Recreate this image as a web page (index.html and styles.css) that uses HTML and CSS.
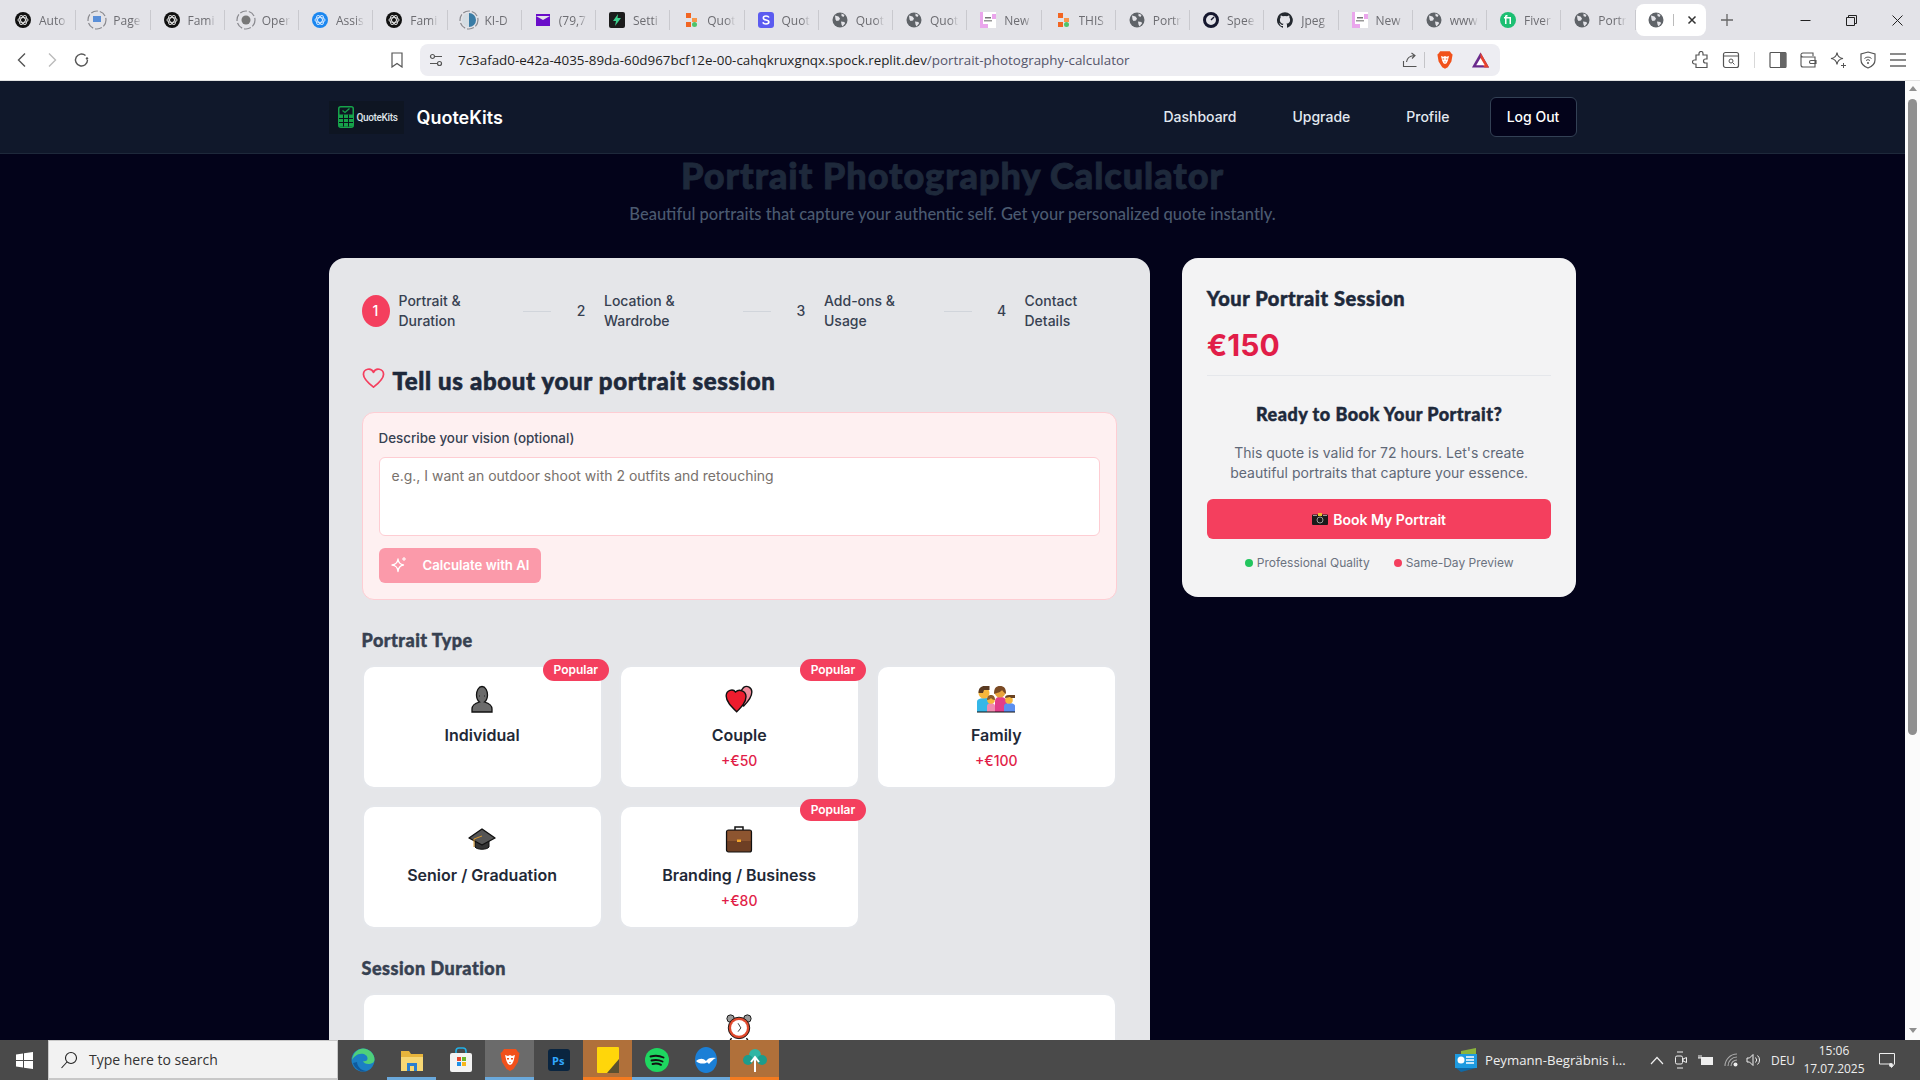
FILE: index.html
```html
<!DOCTYPE html>
<html lang="en">
<head>
  <meta charset="UTF-8" />
  <title>Portrait Photography Calculator</title>
  <link rel="stylesheet" href="styles.css">
</head>
<body>
  <!-- icons used more than once -->
  <svg class="defs" width="0" height="0">
    <symbol id="gpt" viewBox="0 0 16 16">
      <circle cx="8" cy="8" r="8" fill="#111"/>
      <g fill="none" stroke="#ddd" stroke-width="1"><ellipse cx="8" cy="8" rx="5" ry="2.4"/><ellipse cx="8" cy="8" rx="5" ry="2.4" transform="rotate(60 8 8)"/><ellipse cx="8" cy="8" rx="5" ry="2.4" transform="rotate(120 8 8)"/></g>
    </symbol>
    <symbol id="bluegpt" viewBox="0 0 16 16">
      <circle cx="8" cy="8" r="8" fill="#1b87f0"/>
      <g fill="none" stroke="#cfe6ff" stroke-width="1"><ellipse cx="8" cy="8" rx="5" ry="2.4"/><ellipse cx="8" cy="8" rx="5" ry="2.4" transform="rotate(60 8 8)"/><ellipse cx="8" cy="8" rx="5" ry="2.4" transform="rotate(120 8 8)"/></g>
    </symbol>
    <symbol id="globe" viewBox="0 0 16 16">
      <circle cx="8" cy="8" r="7.5" fill="#5f6368"/>
      <path d="M3 3.5l3.5 1 1.5 2-1 2-2.500.5-1-1.500zM9.500 1.500l3 1.500-1 2-2-1zM9 9.500l3.500.5.500 1.500-2.500 3-1-2z" fill="#e3e3e8"/>
    </symbol>
    <symbol id="dashring" viewBox="0 0 20 20">
      <circle cx="10" cy="10" r="9" fill="none" stroke="#8a8a8f" stroke-width="1.200" stroke-dasharray="7 2"/>
    </symbol>
    <symbol id="blocks" viewBox="0 0 16 16">
      <rect x="3" y="1" width="5" height="5" fill="#f26522"/><rect x="9" y="6" width="5" height="4" fill="#f79548"/><rect x="3" y="10" width="5" height="5" fill="#f26522"/><circle cx="11.500" cy="12.500" r="2.500" fill="#4fc36a"/>
    </symbol>
    <symbol id="newpage" viewBox="0 0 16 16">
      <rect width="16" height="16" fill="#fff"/><path d="M0 0h3v16H0zM12 2h4v5h-4zM3 12h5v4H3z" fill="#eaa6ec"/><rect x="5" y="5" width="6" height="1.500" fill="#777"/><rect x="4" y="8" width="8" height="1.500" fill="#999"/>
    </symbol>
    <symbol id="lion" viewBox="0 0 20 24">
      <path d="M4 1h12l2 3 1.500 1-1.500 9-4.500 7-3.500 2-3.500-2-4.500-7L.5 5 2 4z" fill="#f1511b"/>
      <path d="M5 7l3 1 2-1 2 1 3-1-1.500 6L12 16l-2 1-2-1-1.500-3z" fill="#fff"/>
      <path d="M7 10h2v1.500H7zM11 10h2v1.500h-2zM9 14h2l-1 1.500z" fill="#f1511b"/>
    </symbol>
  </svg>

  <div class="screen">
    <div class="tabstrip">
      <div class="tab"><svg class="fav"><use href="#gpt"/></svg><span class="tab-label">Auto</span></div>
      <div class="tab"><svg class="fav wide"><use href="#dashring"/><rect x="6" y="6" width="8" height="6" fill="#5a8fd8"/></svg><span class="tab-label">Page</span></div>
      <div class="tab"><svg class="fav"><use href="#gpt"/></svg><span class="tab-label">Fami</span></div>
      <div class="tab"><svg class="fav wide"><use href="#dashring"/><circle cx="10" cy="10" r="4.500" fill="#777"/></svg><span class="tab-label">Oper</span></div>
      <div class="tab"><svg class="fav"><use href="#bluegpt"/></svg><span class="tab-label">Assis</span></div>
      <div class="tab"><svg class="fav"><use href="#gpt"/></svg><span class="tab-label">Fami</span></div>
      <div class="tab"><svg class="fav wide"><use href="#dashring"/><path d="M10 3a7 7 0 0 1 0 14z" fill="#3a7ca5"/><path d="M10 3a7 7 0 0 0 0 14z" fill="#d5dde3"/></svg><span class="tab-label">KI-D</span></div>
      <div class="tab"><svg class="fav" viewBox="0 0 16 16"><rect x="1" y="2" width="14" height="12" fill="#6a0dc9"/><path d="M1 4l7 4 7-4" fill="#e3e3e8"/></svg><span class="tab-label">(79,7</span></div>
      <div class="tab"><svg class="fav" viewBox="0 0 16 16"><rect width="16" height="16" rx="2" fill="#1c1c1c"/><path d="M9 2L4 9h3l-1 5 6-8H8.500z" fill="#3ecf8e"/></svg><span class="tab-label">Setti</span></div>
      <div class="tab"><svg class="fav"><use href="#blocks"/></svg><span class="tab-label">Quot</span></div>
      <div class="tab"><svg class="fav" viewBox="0 0 16 16"><rect width="16" height="16" rx="3" fill="#5b5bf0"/><path d="M11 5.500C10.500 4.500 9.500 4 8 4 6.500 4 5.300 4.800 5.300 6c0 2.800 5.600 1.400 5.600 4.100C10.900 11.300 9.700 12 8 12c-1.500 0-2.700-.6-3.100-1.700" fill="none" stroke="#fff" stroke-width="1.600"/></svg><span class="tab-label">Quot</span></div>
      <div class="tab"><svg class="fav"><use href="#globe"/></svg><span class="tab-label">Quot</span></div>
      <div class="tab"><svg class="fav"><use href="#globe"/></svg><span class="tab-label">Quot</span></div>
      <div class="tab"><svg class="fav"><use href="#newpage"/></svg><span class="tab-label">New</span></div>
      <div class="tab"><svg class="fav"><use href="#blocks"/></svg><span class="tab-label">THIS</span></div>
      <div class="tab"><svg class="fav"><use href="#globe"/></svg><span class="tab-label">Portr</span></div>
      <div class="tab"><svg class="fav" viewBox="0 0 16 16"><circle cx="8" cy="8" r="6.500" fill="none" stroke="#15172e" stroke-width="3"/><path d="M8 8l3-3" stroke="#15172e" stroke-width="1.500"/></svg><span class="tab-label">Spee</span></div>
      <div class="tab"><svg class="fav" viewBox="0 0 16 16"><path d="M8 .2a8 8 0 0 0-2.500 15.600c.4.100.5-.2.500-.4v-1.400c-2.200.5-2.700-1-2.700-1-.4-.9-.9-1.200-.9-1.200-.7-.5.100-.5.100-.5.800.100 1.200.8 1.200.8.700 1.200 1.900.9 2.300.7.100-.5.300-.9.500-1.100-1.800-.2-3.600-.9-3.600-4 0-.9.300-1.600.8-2.100-.1-.2-.4-1 .1-2.100 0 0 .7-.2 2.200.8a7.600 7.600 0 0 1 4 0c1.500-1 2.200-.8 2.200-.8.400 1.100.2 1.900.1 2.100.5.600.8 1.300.8 2.100 0 3.100-1.900 3.700-3.700 3.900.3.300.6.800.6 1.500v2.200c0 .2.100.5.600.4A8 8 0 0 0 8 .2z" fill="#24292f"/></svg><span class="tab-label">Jpeg</span></div>
      <div class="tab"><svg class="fav"><use href="#newpage"/></svg><span class="tab-label">New</span></div>
      <div class="tab"><svg class="fav"><use href="#globe"/></svg><span class="tab-label">www</span></div>
      <div class="tab"><svg class="fav" viewBox="0 0 16 16"><circle cx="8" cy="8" r="8" fill="#1dbf73"/><path d="M5 12V6.500H4V5h1v-.5C5 3.300 5.800 3 7 3h.5v1.500H7c-.3 0-.5.100-.5.500H11v7H9.500V6.500h-3V12z" fill="#fff"/></svg><span class="tab-label">Fiver</span></div>
      <div class="tab"><svg class="fav"><use href="#globe"/></svg><span class="tab-label">Portr</span></div>
      <div class="tab-active">
        <svg class="fav"><use href="#globe"/></svg><i class="tab-sep"></i>
        <svg class="close-x" viewBox="0 0 10 10"><path d="M1.500 1.500l7 7M8.500 1.500l-7 7" stroke="#333" stroke-width="1.500"/></svg>
      </div>
      <svg class="plus" viewBox="0 0 12 12"><path d="M6 0v12M0 6h12" stroke="#666" stroke-width="1.300"/></svg>
      <div class="win-controls">
        <div class="win-btn"><svg width="11" height="11" viewBox="0 0 11 11"><path d="M.5 5.500h10" stroke="#222"/></svg></div>
        <div class="win-btn"><svg width="11" height="11" viewBox="0 0 11 11"><path d="M.5 2.500h8v8h-8zM2.500 2.500v-2h8v8h-2" fill="none" stroke="#222"/></svg></div>
        <div class="win-btn"><svg width="11" height="11" viewBox="0 0 11 11"><path d="M.5.500l10 10M10.500.500l-10 10" stroke="#222"/></svg></div>
      </div>
    </div>

    <div class="toolbar">
      <div class="tool-left">
        <svg class="tool" viewBox="0 0 16 16"><path d="M11 1.500L4.500 8l6.500 6.500" fill="none" stroke="#555" stroke-width="1.400"/></svg>
        <svg class="tool" viewBox="0 0 16 16"><path d="M5 1.500L11.500 8 5 14.500" fill="none" stroke="#bbb" stroke-width="1.400"/></svg>
        <svg class="tool" viewBox="0 0 16 16"><path d="M13.500 8a6 6 0 1 1-2-4.500" fill="none" stroke="#555" stroke-width="1.400"/><circle cx="13" cy="6.500" r="1.200" fill="#555"/></svg>
        <svg class="tool bookmark" viewBox="0 0 16 16"><path d="M3 1h10v14l-5-3.500L3 15z" fill="none" stroke="#555" stroke-width="1.200"/></svg>
      </div>
      <div class="address">
        <svg class="tool" viewBox="0 0 16 16"><g fill="none" stroke="#555" stroke-width="1.200"><circle cx="4.500" cy="4.500" r="2"/><path d="M7 4.500h7M2 11.500h7"/><circle cx="11.500" cy="11.500" r="2"/></g></svg>
        <span class="url">7c3afad0-e42a-4035-89da-60d967bcf12e-00-cahqkruxgnqx.spock.replit.dev<span class="url-path">/portrait-photography-calculator</span></span>
        <svg class="tool share" viewBox="0 0 16 16"><path d="M1.500 9v5.500h13M4.500 10c.5-4 3-6 7.500-6.500M9.500 1L13 3.500 10 6.500" fill="none" stroke="#555" stroke-width="1.100"/></svg>
        <i class="addr-sep"></i>
        <svg class="addr-lion"><use href="#lion"/></svg>
        <svg class="addr-tri" viewBox="0 0 20 18"><path d="M10 1L19 17H1z" fill="#6a2a8c"/><path d="M10 1L19 17h-5L10 9z" fill="#e8432e"/><path d="M10 7l4.500 7.500h-9z" fill="#fff"/></svg>
      </div>
      <div class="tool-right">
        <svg class="tool-r" viewBox="0 0 18 18"><path d="M7 2.500a2 2 0 0 1 4 0V4h4v4h-1.500a2 2 0 0 0 0 4H15v4.500H4V13H2.500a2 2 0 0 1 0-4H4V4h3z" fill="none" stroke="#555" stroke-width="1.200"/></svg>
        <svg class="tool-r" viewBox="0 0 18 18"><rect x="1.500" y="1.500" width="15" height="15" rx="2" fill="none" stroke="#555" stroke-width="1.200"/><path d="M1.500 5h15" stroke="#555"/><circle cx="9" cy="10" r="2" fill="none" stroke="#555"/><path d="M10.500 11.500l2 2" stroke="#555"/></svg>
        <i class="tool-sep"></i>
        <svg class="tool-r" viewBox="0 0 18 18"><rect x="1" y="1.500" width="16" height="15" rx="1" fill="none" stroke="#555" stroke-width="1.200"/><rect x="11" y="1.500" width="6" height="15" fill="#666"/></svg>
        <svg class="tool-r" viewBox="0 0 18 18"><path d="M2 4.500V14a2 2 0 0 0 2 2h12V6H4a2 2 0 0 1-2-1.500 2 2 0 0 1 2-2.500h10v3M12 9.500h5v3h-5a1.500 1.500 0 0 1 0-3z" fill="none" stroke="#555" stroke-width="1.100"/></svg>
        <svg class="tool-r" viewBox="0 0 18 18"><path d="M8 1.500c.5 4 2 5.500 6 6-4 .5-5.500 2-6 6-.5-4-2-5.500-6-6 4-.5 5.500-2 6-6z" fill="none" stroke="#555" stroke-width="1.200"/><path d="M14.500 12v5M12 14.500h5" stroke="#555"/></svg>
        <svg class="tool-r" viewBox="0 0 18 18"><path d="M9 1l7 2v6c0 4-3 6.500-7 8-4-1.500-7-4-7-8V3z" fill="none" stroke="#555" stroke-width="1.200"/><path d="M5.500 7.500a5 5 0 0 1 7 0M7 9.500a3 3 0 0 1 4 0" fill="none" stroke="#555"/><circle cx="9" cy="12" r="1" fill="#555"/></svg>
        <svg class="tool-r" viewBox="0 0 18 18"><path d="M1 3h16M1 9h16M1 15h16" stroke="#666" stroke-width="1.500"/></svg>
      </div>
    </div>

    <div class="viewport">
      <div class="page">
        <nav class="topnav">
          <div class="topnav-in">
            <div class="brand">
              <div class="logo">
                <svg class="logo-calc" viewBox="0 0 16 22"><rect x=".75" y=".75" width="14.500" height="20.500" rx="2" fill="none" stroke="#16a34a" stroke-width="1.500"/><path d="M1 8.500h14v12H1z" fill="#16a34a"/><path d="M5.500 8.500v12M10.500 8.500v12M1 12.500h14M1 16.500h14" stroke="#0b131e"/><path d="M4.500 4.500l2.500 2 4.500-4" fill="none" stroke="#16a34a" stroke-width="1.300"/></svg>
                <span class="logo-text">QuoteKits</span>
              </div>
              <span class="brand-name">QuoteKits</span>
            </div>
            <div class="navlinks">
              <a class="navlink">Dashboard</a>
              <a class="navlink">Upgrade</a>
              <a class="navlink">Profile</a>
              <button class="logout">Log Out</button>
            </div>
          </div>
        </nav>

        <div class="container">
          <div class="hero">
            <h1>Portrait Photography Calculator</h1>
            <p>Beautiful portraits that capture your authentic self. Get your personalized quote instantly.</p>
          </div>

          <div class="columns">
            <main class="calc">
              <div class="steps">
                <div class="step"><span class="step-num active">1</span><span>Portrait &amp; Duration</span></div>
                <i class="step-line"></i>
                <div class="step"><span class="step-num">2</span><span>Location &amp; Wardrobe</span></div>
                <i class="step-line"></i>
                <div class="step"><span class="step-num">3</span><span>Add-ons &amp; Usage</span></div>
                <i class="step-line"></i>
                <div class="step"><span class="step-num">4</span><span>Contact Details</span></div>
              </div>

              <h2 class="calc-title">
                <svg class="heart" viewBox="0 0 24 24"><path d="M12 21C5 15.500 1.500 12 1.500 7.500A5.500 5.500 0 0 1 12 5.500a5.500 5.500 0 0 1 10.500 2C22.500 12 19 15.500 12 21z" fill="none" stroke="#f43f5e" stroke-width="1.800" stroke-linejoin="round"/></svg>
                Tell us about your portrait session
              </h2>

              <div class="ai-box">
                <label class="ai-label">Describe your vision (optional)</label>
                <textarea class="ai-input" placeholder="e.g., I want an outdoor shoot with 2 outfits and retouching"></textarea>
                <button class="ai-btn">
                  <svg class="ai-spark" viewBox="0 0 16 18"><path d="M7 3c.5 4 2 5.500 5.500 6-3.500.5-5 2-5.500 6.500C6.500 11 5 9.500 1 9c4-.5 5.500-2 6-6z" fill="none" stroke="#fff" stroke-width="1.300" stroke-linejoin="round"/><path d="M13 1v4M11 3h4" stroke="#fff"/></svg>
                  Calculate with AI
                </button>
              </div>

              <h3 class="group-title">Portrait Type</h3>
              <div class="options">
                <div class="option">
                  <span class="badge">Popular</span>
                  <svg class="emoji" viewBox="0 0 28 28"><path d="M4 27v-3c0-3.500 4-6 7.500-7-2-1.500-3-4-3-7 0-4 2-8.500 5.500-8.500s5.500 4.500 5.500 8.500c0 3-1 5.500-3 7 3.500 1 7.500 3.500 7.500 7v3z" fill="#6b6b6b" stroke="#111" stroke-width="1.300"/><path d="M11 11h1M16 11h1" stroke="#222"/></svg>
                  <div class="option-name">Individual</div>
                </div>
                <div class="option">
                  <span class="badge">Popular</span>
                  <svg class="emoji" viewBox="2 2 24 24"><path d="M18 4c3-2 7 0 7 4 0 4-3 8-7 12l-6-8z" fill="#f08a9a" stroke="#111" stroke-width="1.200"/><path d="M11 8c-2-3-8-2-8 3.500C3 16 7 20 12 25c4-4 8-8 8-13 0-5-6-7-9-4z" fill="#ed1c2e" stroke="#111" stroke-width="1.200"/></svg>
                  <div class="option-name">Couple</div>
                  <div class="option-price">+€50</div>
                </div>
                <div class="option">
                  <svg class="emoji emoji-wide" viewBox="0 0 40 28">
                    <path d="M1 27V17c0-3 3-4 9-4 3 0 4 1 4 4v10z" fill="#35b7e8"/><circle cx="8" cy="8" r="5.500" fill="#f6b73c"/><path d="M2.500 8c0-5 2.500-7 6-7h5v4H8l-1 3z" fill="#5a3a22"/>
                    <path d="M19 27V17c0-3 1-5 5-5s7 2 7 5v10z" fill="#e23d8a"/><circle cx="24" cy="7" r="5.500" fill="#e8a33c"/><path d="M18 9c0-6 2-8 6-8s6 2 6 8c-2-1-3-3-4-4-1 2-5 3-8 4z" fill="#7a4a24"/>
                    <path d="M11 27v-6c0-2 2-3 4-3s4 1 4 3v6z" fill="#f18bb0"/><circle cx="15" cy="15" r="3.800" fill="#f6b73c"/><path d="M11 15c0-4 2-5 4-5s4 1 4 5c-2 0-3-1-4-2-1 1-2 2-4 2z" fill="#8a5a2a"/>
                    <path d="M28 27v-6c0-2 2-3 5-3s6 1 6 3v6z" fill="#5b8ff0"/><circle cx="33" cy="15" r="3.800" fill="#f6b73c"/><path d="M29 13c0-2 1-3 4-3h6v3h-4l-1-1z" fill="#6a4222"/>
                    <path d="M1 27h38" stroke="#111" stroke-width="1"/>
                  </svg>
                  <div class="option-name">Family</div>
                  <div class="option-price">+€100</div>
                </div>
                <div class="option">
                  <svg class="emoji" viewBox="0 0 28 28"><path d="M7 13v9c2 3 12 3 14 0v-9z" fill="#333" stroke="#111"/><path d="M14 4L27 13 14 20 1 13z" fill="#555" stroke="#111" stroke-width="1.400" stroke-linejoin="round"/><path d="M14 11L6 14v8" fill="none" stroke="#d9972b" stroke-width="1"/></svg>
                  <div class="option-name">Senior / Graduation</div>
                </div>
                <div class="option">
                  <span class="badge">Popular</span>
                  <svg class="emoji" viewBox="0 0 28 28"><path d="M10 5V2h8v3" fill="none" stroke="#111" stroke-width="1.500"/><rect x="1.500" y="5" width="25" height="22" rx="2" fill="#6e3f24" stroke="#111" stroke-width="1.200"/><rect x="2.500" y="6" width="23" height="10" fill="#8d5530"/><rect x="12" y="14.500" width="4" height="2.500" fill="#f2a52b"/></svg>
                  <div class="option-name">Branding / Business</div>
                  <div class="option-price">+€80</div>
                </div>
              </div>

              <h3 class="group-title duration">Session Duration</h3>
              <div class="option">
                <svg class="emoji" viewBox="0 0 28 30"><circle cx="5" cy="6" r="4" fill="#999" stroke="#111"/><circle cx="23" cy="6" r="4" fill="#999" stroke="#111"/><path d="M6 27l-2 3M22 27l2 3" stroke="#111" stroke-width="1.500"/><circle cx="14" cy="16" r="11.500" fill="#e0482c" stroke="#111"/><circle cx="14" cy="16" r="8.500" fill="#fff"/><path d="M13 11l3 5-3 4" fill="none" stroke="#333"/></svg>
              </div>
            </main>

            <aside class="summary">
              <h2 class="summary-title">Your Portrait Session</h2>
              <div class="total">€150</div>
              <hr class="rule">
              <h3 class="ready">Ready to Book Your Portrait?</h3>
              <p class="ready-note">This quote is valid for 72 hours. Let's create beautiful portraits that capture your essence.</p>
              <button class="book">
                <svg class="cam" viewBox="0 0 16 12"><rect y="1.500" width="16" height="10.500" rx="1" fill="#1a1a1a"/><rect x="6" width="4" height="3" fill="#e8c02c"/><path d="M1 2.500h4M11 2.500h4" stroke="#999"/><circle cx="8" cy="7" r="3" fill="none" stroke="#bbb" stroke-width=".8"/></svg>
                Book My Portrait
              </button>
              <div class="perks">
                <span class="perk"><i class="dot green"></i>Professional Quality</span>
                <span class="perk"><i class="dot rose"></i>Same-Day Preview</span>
              </div>
            </aside>
          </div>
        </div>
      </div>

      <div class="scrollbar">
        <i class="arrow up"></i>
        <div class="thumb"></div>
        <i class="arrow down"></i>
      </div>
    </div>

    <div class="taskbar">
      <div class="start"><svg width="17" height="17" viewBox="0 0 17 17"><path d="M0 2.500L7 1.500v6.500H0zM8 1.300L17 0v8H8zM0 9h7v6.500l-7-1zM8 9h9v8l-9-1.300z" fill="#fff"/></svg></div>
      <div class="search">
        <svg width="18" height="18" viewBox="0 0 18 18"><circle cx="11" cy="7" r="5.500" fill="none" stroke="#222" stroke-width="1.100"/><path d="M7 11l-5.500 6" stroke="#222" stroke-width="1.100"/></svg>
        <span>Type here to search</span>
      </div>
      <div class="task"><svg width="24" height="24" viewBox="0 0 24 24"><circle cx="12" cy="12" r="11.500" fill="#1b7fc4"/><path d="M1 12C2 4 8 .5 12 .5c6 0 11.500 5 11.500 11 0 3-3 4.500-6 4.500-3 0-5-1-5.500-3 2 .5 4 0 4.500-2C17 6 9 4 4.500 8 2.500 9.500 1.500 11 1 12z" fill="#4fd07a"/><path d="M6 14c0 5 5 9 10 9-6 2-12-2-14-8z" fill="#0f5a9e"/></svg></div>
      <div class="task blue"><svg width="24" height="24" viewBox="0 0 24 24"><path d="M1 3h8l2 3h12v17H1z" fill="#e8b53c"/><path d="M1 9h22v14H1z" fill="#f7d774"/><rect x="7" y="15" width="10" height="8" fill="#2a7fd0"/><rect x="10" y="18" width="4" height="5" fill="#f7d774"/></svg></div>
      <div class="task"><svg width="24" height="26" viewBox="0 0 24 26"><path d="M7 7V4a3 3 0 0 1 3-3h4a3 3 0 0 1 3 3v3" fill="none" stroke="#22b0e6" stroke-width="1.600"/><rect x="1" y="6" width="22" height="19" rx="2" fill="#f3f3f3"/><rect x="8" y="10" width="4" height="4" fill="#e8452c"/><rect x="13" y="10" width="4" height="4" fill="#6cb82c"/><rect x="8" y="15" width="4" height="4" fill="#1e90e6"/><rect x="13" y="15" width="4" height="4" fill="#f8b71c"/></svg></div>
      <div class="task active blue"><svg width="20" height="24"><use href="#lion"/></svg></div>
      <div class="task"><svg width="24" height="24" viewBox="0 0 24 24"><rect x="1" y="1" width="22" height="22" rx="3" fill="#0a2540"/><text x="5" y="17" class="ps">Ps</text></svg></div>
      <div class="task orange"><svg width="22" height="26" viewBox="0 0 22 26"><rect width="22" height="26" rx="1" fill="#ffd60a"/><path d="M22 12v14H10z" fill="#5a5030"/></svg></div>
      <div class="task blue"><svg width="24" height="24" viewBox="0 0 24 24"><circle cx="12" cy="12" r="12" fill="#1ed760"/><path d="M5.500 8.500c4.500-1.300 9-1 13 1M6.500 12.500c4-1 7.500-.7 11 1M7.500 16c3-.8 6-.5 8.500.8" fill="none" stroke="#111" stroke-width="1.900" stroke-linecap="round"/></svg></div>
      <div class="task blue"><svg width="24" height="26" viewBox="0 0 24 26"><ellipse cx="12" cy="13" rx="11" ry="13" fill="#1b7fd6"/><path d="M2 14c4-3 7-3 10 0 2-3 5-4 10-3-3 1-5 4-7 6-1-1-2-2-3-1-3 1-7 1-10-2z" fill="#fff"/></svg></div>
      <div class="task orange"><svg width="26" height="24" viewBox="0 0 26 24"><circle cx="13" cy="7" r="6" fill="#2fb6a4"/><circle cx="6" cy="12" r="5" fill="#1c9c8c"/><circle cx="20" cy="12" r="5" fill="#1c9c8c"/><path d="M13 24V10M9 14l4-5 4 5" fill="none" stroke="#fff" stroke-width="2"/></svg></div>

      <div class="tray">
        <div class="news">
          <svg width="22" height="24" viewBox="0 0 22 24"><path d="M6 3L21 0v16L6 19z" fill="#8bb33c"/><path d="M0 6h22v14H0z" fill="#1e9be0"/><path d="M1 20h20L6 24z" fill="#0f6aa8"/><circle cx="6" cy="12" r="3.500" fill="#fff"/><path d="M11 9h8M11 12h8M11 15h8" stroke="#fff" stroke-width="1.500"/></svg>
          <span>Peymann-Begräbnis i...</span>
        </div>
        <div class="tray-icon w24"><svg width="14" height="9" viewBox="0 0 14 9"><path d="M1 8l6-6.500L13 8" fill="none" stroke="#eee" stroke-width="1.200"/></svg></div>
        <div class="tray-icon w24"><svg width="12" height="18" viewBox="0 0 12 18"><path d="M2 1h6M2 17h6" stroke="#eee"/><rect x=".5" y="5" width="7" height="8" rx="1.500" fill="none" stroke="#eee"/><path d="M8 8l3.500-1.500v5L8 10z" fill="none" stroke="#eee"/></svg></div>
        <div class="tray-icon w25"><svg width="16" height="12" viewBox="0 0 16 12"><rect x="3" y="3" width="12" height="8" fill="#eee"/><path d="M1 1v3M3 1v3M0 4h4" stroke="#eee"/></svg></div>
        <div class="tray-icon w25"><svg width="14" height="14" viewBox="0 0 14 14"><path d="M1 13a12 12 0 0 1 12-12M4 13a9 9 0 0 1 9-9M7 13a6 6 0 0 1 6-6" fill="none" stroke="#aaa" stroke-width="1.100"/><circle cx="11.500" cy="11.500" r="2" fill="#eee"/></svg></div>
        <div class="tray-icon w21"><svg width="16" height="14" viewBox="0 0 16 14"><path d="M1 5h2.500L7 1.500v11L3.500 9H1z" fill="none" stroke="#eee"/><path d="M9.500 4.500a3.500 3.500 0 0 1 0 5M11.500 2.500a6 6 0 0 1 0 9" fill="none" stroke="#eee"/></svg></div>
        <div class="tray-lang">DEU</div>
        <div class="clock"><span>15:06</span><span>17.07.2025</span></div>
        <div class="tray-icon w42"><svg width="16" height="15" viewBox="0 0 16 15"><path d="M.5.500h15V11l-3 3.500V11H.5z" fill="none" stroke="#eee"/><circle cx="12" cy="12" r="2" fill="#eee"/></svg></div>
      </div>
    </div>
  </div>
</body>
</html>
```

FILE: styles.css
```css
* {
  box-sizing: border-box;
}
body {
  margin: 0;
  font-family: Inter, "Liberation Sans", sans-serif;
  background: #03031a;
}
.defs {
  position: absolute;
}
.screen {
  width: 1920px;
  height: 1080px;
  display: flex;
  flex-direction: column;
  overflow: hidden;
}

/* browser tabs */
.tabstrip {
  height: 40px;
  flex: none;
  display: flex;
  align-items: center;
  padding-left: 2px;
  background: #e3e3e8;
  font-family: "Open Sans", sans-serif;
}
.tab {
  width: 74.25px;
  height: 20px;
  flex: none;
  display: flex;
  align-items: center;
  gap: 8px;
  padding-left: 13px;
  border-right: 1px solid #c9c9ce;
}
.fav {
  width: 16px;
  height: 16px;
  flex: none;
}
.fav.wide {
  width: 20px;
  height: 20px;
  margin-left: -2px;
  margin-right: -2px;
}
.tab-label {
  width: 30px;
  overflow: hidden;
  white-space: nowrap;
  font-size: 12px;
  color: #6d6d72;
  -webkit-mask-image: linear-gradient(90deg, #000 65%, transparent 95%);
  mask-image: linear-gradient(90deg, #000 65%, transparent 95%);
}
.tab-active {
  width: 70px;
  height: 32px;
  flex: none;
  display: flex;
  align-items: center;
  padding-left: 12px;
  background: #fff;
  border-radius: 8px;
}
.tab-sep {
  width: 1px;
  height: 12px;
  margin: 0 13px 0 9px;
  background: #bbb;
}
.close-x {
  width: 10px;
  height: 10px;
}
.plus {
  width: 12px;
  height: 12px;
  margin-left: 15px;
}
.win-controls {
  margin-left: auto;
  display: flex;
}
.win-btn {
  width: 46px;
  height: 40px;
  display: flex;
  align-items: center;
  justify-content: center;
}

/* address bar row */
.toolbar {
  height: 41px;
  flex: none;
  display: flex;
  align-items: center;
  background: #fff;
  border-bottom: 1px solid #e2e2e2;
  padding-bottom: 1px;
}
.tool {
  width: 16px;
  height: 16px;
  flex: none;
}
.tool-left {
  width: 420px;
  display: flex;
  align-items: center;
  gap: 14px;
  padding: 0 15px 0 14px;
}
.bookmark {
  margin-left: auto;
}
.address {
  width: 1080px;
  height: 32px;
  display: flex;
  align-items: center;
  gap: 14px;
  padding: 0 10px 0 8px;
  background: #ededf2;
  border-radius: 8px;
}
.url {
  font-family: "Open Sans", sans-serif;
  font-size: 13.4px;
  color: #1f1f1f;
  white-space: nowrap;
}
.url-path {
  color: #55556a;
}
.share {
  margin-left: auto;
  margin-right: -8px;
}
.addr-sep {
  width: 1px;
  height: 16px;
  background: #c4c4c8;
}
.addr-lion {
  width: 16px;
  height: 20px;
  margin-left: -2px;
}
.addr-tri {
  width: 19px;
  height: 18px;
  margin-left: 4px;
}
.tool-right {
  flex: 1;
  display: flex;
  align-items: center;
  justify-content: flex-end;
  gap: 12px;
  padding-right: 13px;
}
.tool-r {
  width: 18px;
  height: 18px;
}
.tool-sep {
  width: 1px;
  height: 16px;
  margin: 0 2px;
  background: #d8d8d8;
}

/* page area */
.viewport {
  flex: 1;
  min-height: 0;
  display: flex;
}
.page {
  width: 1905px;
  flex: none;
  overflow: hidden;
  background: #03031a;
}
.scrollbar {
  width: 15px;
  flex: none;
  display: flex;
  flex-direction: column;
  align-items: center;
  padding: 5px 0 7px;
  background: #fbfbfb;
}
.arrow {
  width: 0;
  height: 0;
  border-left: 4px solid transparent;
  border-right: 4px solid transparent;
}
.arrow.up {
  border-bottom: 5px solid #8f8f8f;
}
.arrow.down {
  margin-top: auto;
  border-top: 5px solid #8f8f8f;
}
.thumb {
  width: 9px;
  height: 636px;
  margin-top: 8px;
  background: #8f8f8f;
  border-radius: 5px;
}

/* site nav */
.topnav {
  height: 73px;
  background: #10182b;
  border-bottom: 1px solid #1e293b;
}
.topnav-in {
  max-width: 1280px;
  height: 72px;
  margin: 0 auto;
  padding: 0 16px;
  display: flex;
  align-items: center;
  justify-content: space-between;
}
.brand {
  display: flex;
  align-items: center;
  gap: 13px;
}
.logo {
  width: 75px;
  height: 33px;
  display: flex;
  align-items: center;
  gap: 3px;
  padding-left: 9px;
  background: #0e1522;
}
.logo-calc {
  width: 16px;
  height: 22px;
  flex: none;
}
.logo-text {
  font-family: "Roboto", sans-serif;
  font-size: 10px;
  font-weight: 500;
  letter-spacing: -0.35px;
  color: #dfe3e8;
}
.brand-name {
  font-size: 18px;
  font-weight: 600;
  color: #fff;
}
.navlinks {
  display: flex;
  align-items: center;
  gap: 24px;
}
.navlink {
  padding: 0 16px 2px;
  font-size: 14px;
  font-weight: 500;
  color: #e2e8f0;
}
.logout {
  width: 87px;
  height: 40px;
  padding: 0 0 2px;
  font-family: inherit;
  font-size: 14px;
  font-weight: 500;
  color: #fff;
  background: #03031a;
  border: 1px solid #334155;
  border-radius: 6px;
}

.container {
  max-width: 1280px;
  margin: 0 auto;
  padding: 0 16px;
}
.hero {
  text-align: center;
  padding-top: 1px;
}

/* heavy headings, the stroke thickens Lato's bold */
.hero h1,
.calc-title,
.group-title,
.summary-title,
.ready {
  font-family: Lato, sans-serif;
  font-weight: 900;
  letter-spacing: 0.027em;
  -webkit-text-stroke: 0.025em currentColor;
}
.hero h1 {
  margin: 0;
  font-size: 36px;
  line-height: 40px;
  color: #1e293b;
}
.hero p {
  margin: 7px 0 0;
  font-family: Lato, sans-serif;
  font-size: 16.5px;
  line-height: 24px;
  font-weight: 500;
  color: #4b5a70;
}
.columns {
  display: grid;
  grid-template-columns: repeat(3, 1fr);
  gap: 32px;
  margin-top: 32px;
  align-items: start;
}

/* left card */
.calc {
  grid-column: span 2;
  padding: 33px 33px 0;
  background: #e5e6e9;
  border-radius: 16px;
  min-height: 900px;
}
.steps {
  display: grid;
  grid-template-columns: 145.5px 28px 160px 28px 140.5px 28px 128px;
  column-gap: 16px;
  align-items: center;
  height: 40px;
  font-size: 14px;
  line-height: 20px;
  font-weight: 500;
  color: #374151;
}
.step {
  display: flex;
  align-items: center;
  gap: 9px;
}
.step-num {
  width: 28px;
  height: 32px;
  flex: none;
  display: flex;
  align-items: center;
  justify-content: center;
}
.step-num.active {
  color: #fff;
  background: #f43f5e;
  border-radius: 50%;
}
.step-line {
  height: 1px;
  background: #d1d5db;
}
.calc-title {
  display: flex;
  align-items: center;
  gap: 8px;
  height: 32px;
  margin: 33px 0 16px;
  font-size: 24px;
  color: #1e293b;
}
.heart {
  width: 23px;
  height: 23px;
  flex: none;
  margin-bottom: 3px;
}
.ai-box {
  display: flex;
  flex-direction: column;
  align-items: flex-start;
  height: 188px;
  padding: 15px 16px 16px;
  background: #fef0f1;
  border: 1px solid #fecdd3;
  border-radius: 12px;
}
.ai-label {
  height: 20px;
  font-size: 13.4px;
  line-height: 20px;
  font-weight: 500;
  color: #374151;
}
.ai-input {
  width: 100%;
  height: 80px;
  margin-top: 9px;
  padding: 8px 12px;
  resize: none;
  font-family: inherit;
  font-size: 14px;
  line-height: 20px;
  background: #fff;
  border: 1px solid #fecdd3;
  border-radius: 6px;
}
.ai-input::placeholder {
  color: #78716c;
}
.ai-btn {
  width: 162px;
  height: 36px;
  margin-top: 12px;
  display: flex;
  align-items: center;
  gap: 16px;
  padding: 0 12px;
  white-space: nowrap;
  font-family: inherit;
  font-size: 13.2px;
  font-weight: 600;
  color: #fff;
  background: #fb9aaa;
  border: none;
  border-radius: 6px;
}
.ai-spark {
  width: 16px;
  height: 18px;
  flex: none;
}
.group-title {
  height: 28px;
  margin: 26px 0 11px;
  font-size: 18px;
  line-height: 28px;
  color: #374151;
}
.group-title.duration {
  margin-top: 25px;
}
.options {
  display: grid;
  grid-template-columns: repeat(3, 1fr);
  gap: 16px;
}
.option {
  position: relative;
  height: 124px;
  padding-top: 18px;
  text-align: center;
  background: #fff;
  border: 2px solid #e5e7eb;
  border-radius: 12px;
}
.badge {
  position: absolute;
  top: -8px;
  right: -8px;
  height: 22px;
  padding: 0 10.5px;
  font-size: 12px;
  line-height: 22px;
  font-weight: 600;
  color: #fff;
  background: #f43f5e;
  border-radius: 11px;
}
.emoji {
  display: block;
  width: 28px;
  height: 28px;
  margin: 0 auto;
}
.emoji-wide {
  width: 40px;
}
.option-name {
  margin-top: 10px;
  font-size: 16px;
  line-height: 24px;
  font-weight: 600;
  color: #1f2937;
}
.option-price {
  margin-top: 4px;
  font-size: 14px;
  line-height: 20px;
  font-weight: 500;
  color: #e11d48;
}

/* right card */
.summary {
  height: 339px;
  padding: 24px 25px;
  background: #f3f3f4;
  border-radius: 16px;
}
.summary-title {
  margin: 2px 0 0;
  font-size: 20px;
  line-height: 28px;
  color: #1e293b;
}
.total {
  margin-top: 15px;
  font-size: 30px;
  line-height: 36px;
  font-weight: 700;
  color: #e11d48;
}
.rule {
  margin: 12px 0 0;
  border: none;
  border-top: 1px solid #e5e7eb;
}
.ready {
  margin: 24px 0 0;
  text-align: center;
  font-size: 18px;
  line-height: 28px;
  color: #1e293b;
}
.ready-note {
  margin: 15px 0 0;
  text-align: center;
  font-size: 14px;
  line-height: 20px;
  color: #5f6877;
}
.book {
  width: 100%;
  height: 40px;
  margin-top: 16px;
  display: flex;
  align-items: center;
  justify-content: center;
  gap: 5px;
  font-family: inherit;
  font-size: 14px;
  font-weight: 600;
  color: #fff;
  background: #f43f5e;
  border: none;
  border-radius: 6px;
}
.cam {
  width: 16px;
  height: 12px;
}
.perks {
  display: flex;
  justify-content: center;
  gap: 24px;
  margin-top: 16px;
  font-size: 12px;
  line-height: 16px;
  color: #6b7280;
}
.perk {
  display: flex;
  align-items: center;
  gap: 4px;
}
.dot {
  width: 8px;
  height: 8px;
  border-radius: 50%;
}
.dot.green {
  background: #22c55e;
}
.dot.rose {
  background: #f43f5e;
}

/* windows taskbar */
.taskbar {
  height: 40px;
  flex: none;
  display: flex;
  align-items: stretch;
  background: #4a4a4a;
  font-family: "Open Sans", sans-serif;
}
.start {
  width: 48px;
  display: flex;
  align-items: center;
  justify-content: center;
}
.search {
  width: 290px;
  display: flex;
  align-items: center;
  gap: 11px;
  padding-left: 11px;
  font-size: 14px;
  color: #333;
  background: #f2f2f2;
  border: 1px solid #c8c8c8;
  border-bottom-width: 2px;
}
.task {
  width: 49px;
  display: flex;
  align-items: center;
  justify-content: center;
  border-bottom: 3px solid transparent;
  padding-top: 3px;
}
.task.blue {
  border-bottom-color: #6aa9dc;
}
.task.active {
  background: #6b6b6b;
}
.task.orange {
  background: #b0703a;
  border-bottom-color: #f47b20;
}
.ps {
  font-family: "Open Sans", sans-serif;
  font-size: 11px;
  font-weight: 700;
  fill: #31a8ff;
}
.tray {
  margin-left: auto;
  padding-right: 12px;
  display: flex;
  align-items: center;
  color: #eee;
}
.news {
  width: 190px;
  display: flex;
  align-items: center;
  gap: 8px;
  font-size: 13.2px;
  white-space: nowrap;
}
.tray-icon {
  display: flex;
  align-items: center;
  justify-content: center;
}
.w21 { width: 21px; }
.w24 { width: 24px; }
.w25 { width: 25px; }
.w42 { width: 42px; }
.tray-lang {
  width: 38px;
  text-align: center;
  font-size: 12px;
}
.clock {
  width: 64px;
  display: flex;
  flex-direction: column;
  align-items: center;
  gap: 2px;
  font-size: 12px;
  line-height: 16px;
}
```
